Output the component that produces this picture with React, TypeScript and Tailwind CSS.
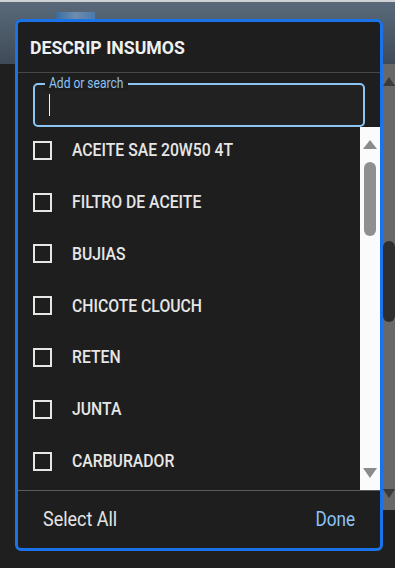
import React from "react";

const items = [
  "ACEITE SAE 20W50 4T",
  "FILTRO DE ACEITE",
  "BUJIAS",
  "CHICOTE CLOUCH",
  "RETEN",
  "JUNTA",
  "CARBURADOR",
];

const font = { fontFamily: "Roboto, 'Noto Sans', sans-serif" };

export default function App() {
  return (
    <div
      className="relative w-[395px] h-[568px] overflow-hidden bg-[#1f1f1f]"
      style={font}
    >
      {/* background page top bar */}
      <div className="h-[64px] border-t-2 border-[#cfd2d5] bg-linear-to-b from-[#5a6a7a] to-[#3e4a56]">
        <div className="ml-[56px] mt-[10px] w-[39px] h-[10px] bg-linear-to-r from-[#3a6ca0] via-[#6f8cb0] to-[#4a7aab]" />
      </div>

      {/* background page scrollbar */}
      <div className="absolute right-0 top-[64px] w-[12px] h-[446px] bg-[#686868] flex flex-col items-center">
        <div className="mt-[13px] w-0 h-0 border-l-[6px] border-r-[6px] border-b-[9px] border-l-transparent border-r-transparent border-b-[#3a3a3a]" />
        <div className="mt-[155px] w-[12px] h-[81px] rounded-full bg-[#2e2e2e]" />
        <div className="mt-[167px] w-0 h-0 border-l-[6px] border-r-[6px] border-t-[9px] border-l-transparent border-r-transparent border-t-[#3a3a3a]" />
      </div>

      {/* modal */}
      <div className="absolute left-[15px] top-[19px] w-[368px] h-[532px] rounded-[6px] border-[3px] border-[#1a73e8] bg-[#1e1e1e] flex flex-col overflow-hidden">
        {/* header */}
        <div className="h-[51px] shrink-0 flex items-center pl-[12px] border-b border-[#474747]">
          <span className="inline-block origin-left scale-x-[0.93] text-[19px] font-bold text-[#f0f0f0] leading-none whitespace-nowrap">
            DESCRIP INSUMOS
          </span>
        </div>

        {/* search */}
        <div className="shrink-0 pt-[10px] px-[15px]">
          <div className="relative h-[44px] rounded-[5px] border-2 border-[#8cc4f4] bg-[#212121]">
            <div className="absolute left-[10px] top-[-10px] w-[83px] px-[4px] bg-[#1e1e1e] h-[16px] leading-[16px] overflow-hidden">
              <span className="inline-block origin-left scale-x-[0.86] text-[14px] text-[#8cc4f4] whitespace-nowrap">
                Add or search
              </span>
            </div>
            <div className="absolute left-[14px] top-[9px] w-[1px] h-[22px] bg-[#f0f0f0]" />
          </div>
        </div>

        {/* list */}
        <div className="flex h-[364px] shrink-0 border-b border-[#5a5a5a]">
          <div className="flex-1 overflow-hidden">
            <div className="-mt-[2.6px] flex flex-col">
              {items.map((t) => (
                <div key={t} className="h-[51.8px] shrink-0 flex items-center pl-[15px]">
                  <div className="w-[19px] h-[19px] border-2 border-[#e6e6e6] shrink-0" />
                  <span className="ml-[20px] inline-block origin-left scale-x-[0.875] text-[18px] font-medium text-[#e6e6e6] whitespace-nowrap leading-none">
                    {t}
                  </span>
                </div>
              ))}
            </div>
          </div>
          <div className="w-[20px] bg-[#fbfbfb] flex flex-col items-center">
            <div className="mt-[13px] w-0 h-0 border-l-[7px] border-r-[7px] border-b-[9px] border-l-transparent border-r-transparent border-b-[#8a8a8a]" />
            <div className="mt-[13px] w-[12px] h-[74px] rounded-full bg-[#8f8f8f]" />
            <div className="mt-auto mb-[12px] w-0 h-0 border-l-[7px] border-r-[7px] border-t-[10px] border-l-transparent border-r-transparent border-t-[#8a8a8a]" />
          </div>
        </div>

        {/* footer */}
        <div className="flex-1 flex items-center justify-between px-[25px]">
          <span className="inline-block origin-left scale-x-[0.92] text-[19.5px] text-[#e4e4e4] leading-none whitespace-nowrap">
            Select All
          </span>
          <span className="inline-block origin-right scale-x-[0.88] text-[19.5px] text-[#8cc4f4] leading-none whitespace-nowrap">
            Done
          </span>
        </div>
      </div>
    </div>
  );
}
